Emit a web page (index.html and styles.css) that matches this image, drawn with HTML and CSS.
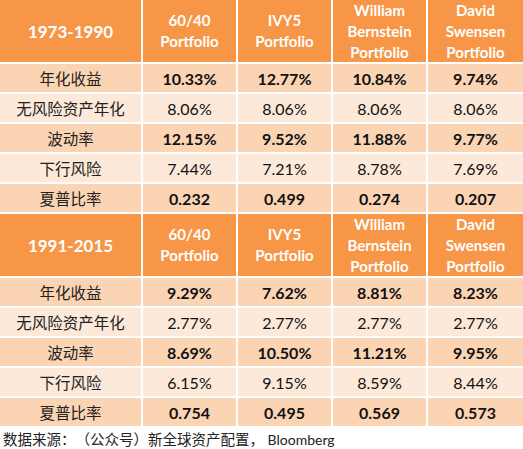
FILE: index.html
```html
<!DOCTYPE html>
<html lang="zh-CN">
<head>
    <meta charset="UTF-8">
    <title>Portfolio Comparison</title>
    <link rel="stylesheet" href="styles.css">
</head>
<body>
    <div class="grid">
        <div class="cell head period">1973-1990</div>
        <div class="cell head">60/40<br>Portfolio</div>
        <div class="cell head">IVY5<br>Portfolio</div>
        <div class="cell head">William<br>Bernstein<br>Portfolio</div>
        <div class="cell head">David<br>Swensen<br>Portfolio</div>

        <div class="cell dark label">年化收益</div>
        <div class="cell dark bold">10.33%</div>
        <div class="cell dark bold">12.77%</div>
        <div class="cell dark bold">10.84%</div>
        <div class="cell dark bold">9.74%</div>

        <div class="cell light label">无风险资产年化</div>
        <div class="cell light">8.06%</div>
        <div class="cell light">8.06%</div>
        <div class="cell light">8.06%</div>
        <div class="cell light">8.06%</div>

        <div class="cell dark label">波动率</div>
        <div class="cell dark bold">12.15%</div>
        <div class="cell dark bold">9.52%</div>
        <div class="cell dark bold">11.88%</div>
        <div class="cell dark bold">9.77%</div>

        <div class="cell light label">下行风险</div>
        <div class="cell light">7.44%</div>
        <div class="cell light">7.21%</div>
        <div class="cell light">8.78%</div>
        <div class="cell light">7.69%</div>

        <div class="cell dark label">夏普比率</div>
        <div class="cell dark bold">0.232</div>
        <div class="cell dark bold">0.499</div>
        <div class="cell dark bold">0.274</div>
        <div class="cell dark bold">0.207</div>

        <div class="cell head period">1991-2015</div>
        <div class="cell head">60/40<br>Portfolio</div>
        <div class="cell head">IVY5<br>Portfolio</div>
        <div class="cell head">William<br>Bernstein<br>Portfolio</div>
        <div class="cell head">David<br>Swensen<br>Portfolio</div>

        <div class="cell dark label">年化收益</div>
        <div class="cell dark bold">9.29%</div>
        <div class="cell dark bold">7.62%</div>
        <div class="cell dark bold">8.81%</div>
        <div class="cell dark bold">8.23%</div>

        <div class="cell light label">无风险资产年化</div>
        <div class="cell light">2.77%</div>
        <div class="cell light">2.77%</div>
        <div class="cell light">2.77%</div>
        <div class="cell light">2.77%</div>

        <div class="cell dark label">波动率</div>
        <div class="cell dark bold">8.69%</div>
        <div class="cell dark bold">10.50%</div>
        <div class="cell dark bold">11.21%</div>
        <div class="cell dark bold">9.95%</div>

        <div class="cell light label">下行风险</div>
        <div class="cell light">6.15%</div>
        <div class="cell light">9.15%</div>
        <div class="cell light">8.59%</div>
        <div class="cell light">8.44%</div>

        <div class="cell dark label">夏普比率</div>
        <div class="cell dark bold">0.754</div>
        <div class="cell dark bold">0.495</div>
        <div class="cell dark bold">0.569</div>
        <div class="cell dark bold">0.573</div>
    </div>
    <p class="source"><span class="cn">数据来源：（公众号）新全球资产配置，</span> Bloomberg</p>
</body>
</html>
```

FILE: styles.css
```css
body {
    margin: 0;
    padding: 0;
    background-color: white;
    font-family: Lato, "Noto Sans CJK SC", sans-serif;
    color: #111;
}
.grid {
    display: grid;
    grid-template-columns: 141px 93px 93px 93px 95px;
    grid-template-rows: 62px repeat(5, 28px) 62px repeat(5, 28px);
    gap: 2px;
    background-color: white;
}
.cell {
    display: flex;
    align-items: center;
    justify-content: center;
    text-align: center;
    font-size: 16px;
}
.head {
    background-color: #f79646;
    color: white;
    font-weight: bold;
    font-size: 15px;
    line-height: 21px;
}
.head.period {
    font-size: 17px;
}
.dark {
    background-color: #fbd4b4;
}
.light {
    background-color: #fde9d9;
}
.bold {
    font-weight: bold;
}
.label {
    font-family: "Noto Sans CJK SC", sans-serif;
    font-size: 15.5px;
    color: #222;
}
.source {
    margin: 0;
    padding: 2px 0 0 3px;
    height: 21px;
    line-height: 21px;
    font-size: 14px;
    color: #222;
    white-space: pre;
}
.source .cn {
    font-family: "Noto Sans CJK SC", sans-serif;
    font-size: 14.5px;
    text-spacing-trim: space-all;
}
```
